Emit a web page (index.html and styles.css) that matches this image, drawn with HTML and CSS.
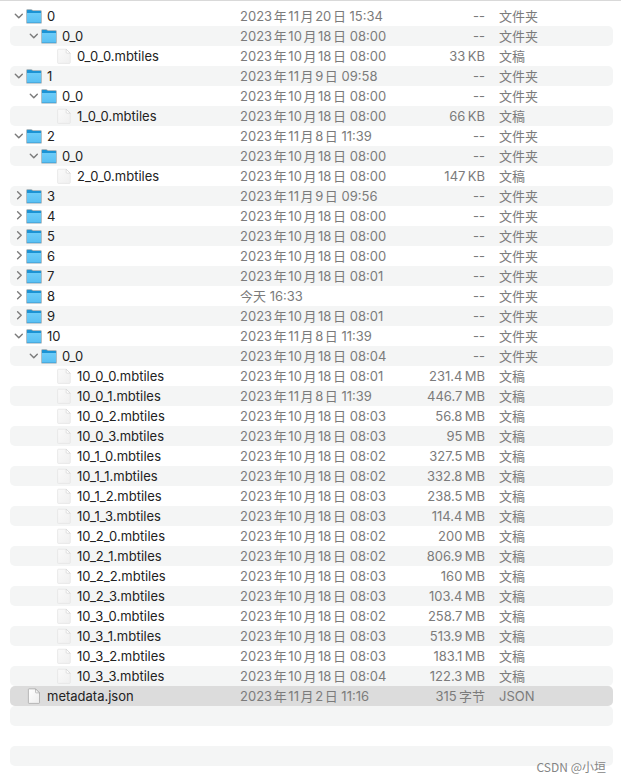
FILE: index.html
```
<!DOCTYPE html>
<html lang="zh-CN">
<head>
<meta charset="utf-8">
<meta name="viewport" content="width=device-width, initial-scale=1">
<title>文件列表</title>
<link rel="stylesheet" href="styles.css">
</head>
<body>
<svg class="defs" width="0" height="0" aria-hidden="true">
  <defs>
    <linearGradient id="folder-front" x1="0" y1="0" x2="0" y2="1">
      <stop offset="0" stop-color="#6dccf8"/>
      <stop offset="1" stop-color="#58c0f3"/>
    </linearGradient>
    <linearGradient id="paper" x1="0" y1="0" x2="1" y2="1">
      <stop offset="0" stop-color="#ffffff"/>
      <stop offset="1" stop-color="#ededed"/>
    </linearGradient>
    <linearGradient id="paper-dim" x1="0" y1="0" x2="1" y2="1">
      <stop offset="0" stop-color="#fafafa"/>
      <stop offset="1" stop-color="#f0f0f0"/>
    </linearGradient>
    <symbol id="open" viewBox="0 0 12 16"><path d="M1.3 6.2 4.8 9.8 8.3 6.2" fill="none" stroke="#7b7b7b" stroke-width="1.4" stroke-linecap="round" stroke-linejoin="round"/></symbol>
    <symbol id="closed" viewBox="0 0 12 16"><path d="M3.6 3.8 7.2 7.3 3.6 10.8" fill="none" stroke="#7b7b7b" stroke-width="1.4" stroke-linecap="round" stroke-linejoin="round"/></symbol>
    <symbol id="folder" viewBox="0 0 16 16">
      <path d="M.3 14.7V2.2Q.3 1.2 1.3 1.2H5.2Q5.8 1.2 6.3 1.7T7.4 2.2H14.7Q15.7 2.2 15.7 3.2V14.7Q15.7 15.6 14.9 15.6H1.1Q.3 15.6.3 14.7Z" fill="#8fa5b0"/>
      <path d="M1 5V2.6Q1 2 1.6 2H5.2L6.8 3H14.4Q15 3 15 3.6V5Z" fill="#1b93d4"/>
      <path d="M1 5H15V14.8H1Z" fill="url(#folder-front)"/>
      <path d="M1 14.3H15V15H1Z" fill="#3fa5dc"/>
    </symbol>
    <symbol id="file" viewBox="0 0 16 16">
      <path d="M2.4 1.2H10.2L14.2 5.2V14.6Q14.2 15.4 13.4 15.4H2.4Q1.6 15.4 1.6 14.6V2Q1.6 1.2 2.4 1.2Z" fill="url(#paper-dim)" stroke="#e2e2e2" stroke-width=".7"/>
      <path d="M10.2 1.2V4.5Q10.2 5.2 10.9 5.2H14.2Z" fill="#fff" stroke="#cfcfcf" stroke-width=".6"/>
    </symbol>
    <symbol id="json" viewBox="0 0 16 16">
      <path d="M3 .9H9.5L13.5 4.9V14.7Q13.5 15.4 12.8 15.4H3Q2.4 15.4 2.4 14.7V1.6Q2.4.9 3 .9Z" fill="url(#paper)" stroke="#a0a0a0" stroke-width=".7"/>
      <path d="M9.5.9V4.2Q9.5 4.9 10.2 4.9H13.5Z" fill="#f2f2f2" stroke="#a0a0a0" stroke-width=".6"/>
    </symbol>
  </defs>
</svg>
<main class="browser">
<table class="files" aria-label="文件">
<colgroup><col><col class="col-date"><col class="col-size"><col class="col-kind"></colgroup>
<tbody>
<tr><td><div class="name"><button class="toggle" aria-label="折叠"><svg><use href="#open"/></svg></button><svg class="icon"><use href="#folder"/></svg>0</div></td><td>2023年11月20日 15:34</td><td>--</td><td>文件夹</td></tr>
<tr><td><div class="name l1"><button class="toggle" aria-label="折叠"><svg><use href="#open"/></svg></button><svg class="icon"><use href="#folder"/></svg>0_0</div></td><td>2023年10月18日 08:00</td><td>--</td><td>文件夹</td></tr>
<tr><td><div class="name l2"><svg class="icon"><use href="#file"/></svg>0_0_0.mbtiles</div></td><td>2023年10月18日 08:00</td><td>33&thinsp;KB</td><td>文稿</td></tr>
<tr><td><div class="name"><button class="toggle" aria-label="折叠"><svg><use href="#open"/></svg></button><svg class="icon"><use href="#folder"/></svg>1</div></td><td>2023年11月9日 09:58</td><td>--</td><td>文件夹</td></tr>
<tr><td><div class="name l1"><button class="toggle" aria-label="折叠"><svg><use href="#open"/></svg></button><svg class="icon"><use href="#folder"/></svg>0_0</div></td><td>2023年10月18日 08:00</td><td>--</td><td>文件夹</td></tr>
<tr><td><div class="name l2"><svg class="icon"><use href="#file"/></svg>1_0_0.mbtiles</div></td><td>2023年10月18日 08:00</td><td>66&thinsp;KB</td><td>文稿</td></tr>
<tr><td><div class="name"><button class="toggle" aria-label="折叠"><svg><use href="#open"/></svg></button><svg class="icon"><use href="#folder"/></svg>2</div></td><td>2023年11月8日 11:39</td><td>--</td><td>文件夹</td></tr>
<tr><td><div class="name l1"><button class="toggle" aria-label="折叠"><svg><use href="#open"/></svg></button><svg class="icon"><use href="#folder"/></svg>0_0</div></td><td>2023年10月18日 08:00</td><td>--</td><td>文件夹</td></tr>
<tr><td><div class="name l2"><svg class="icon"><use href="#file"/></svg>2_0_0.mbtiles</div></td><td>2023年10月18日 08:00</td><td>147&thinsp;KB</td><td>文稿</td></tr>
<tr><td><div class="name"><button class="toggle" aria-label="展开"><svg><use href="#closed"/></svg></button><svg class="icon"><use href="#folder"/></svg>3</div></td><td>2023年11月9日 09:56</td><td>--</td><td>文件夹</td></tr>
<tr><td><div class="name"><button class="toggle" aria-label="展开"><svg><use href="#closed"/></svg></button><svg class="icon"><use href="#folder"/></svg>4</div></td><td>2023年10月18日 08:00</td><td>--</td><td>文件夹</td></tr>
<tr><td><div class="name"><button class="toggle" aria-label="展开"><svg><use href="#closed"/></svg></button><svg class="icon"><use href="#folder"/></svg>5</div></td><td>2023年10月18日 08:00</td><td>--</td><td>文件夹</td></tr>
<tr><td><div class="name"><button class="toggle" aria-label="展开"><svg><use href="#closed"/></svg></button><svg class="icon"><use href="#folder"/></svg>6</div></td><td>2023年10月18日 08:00</td><td>--</td><td>文件夹</td></tr>
<tr><td><div class="name"><button class="toggle" aria-label="展开"><svg><use href="#closed"/></svg></button><svg class="icon"><use href="#folder"/></svg>7</div></td><td>2023年10月18日 08:01</td><td>--</td><td>文件夹</td></tr>
<tr><td><div class="name"><button class="toggle" aria-label="展开"><svg><use href="#closed"/></svg></button><svg class="icon"><use href="#folder"/></svg>8</div></td><td>今天 16:33</td><td>--</td><td>文件夹</td></tr>
<tr><td><div class="name"><button class="toggle" aria-label="展开"><svg><use href="#closed"/></svg></button><svg class="icon"><use href="#folder"/></svg>9</div></td><td>2023年10月18日 08:01</td><td>--</td><td>文件夹</td></tr>
<tr><td><div class="name"><button class="toggle" aria-label="折叠"><svg><use href="#open"/></svg></button><svg class="icon"><use href="#folder"/></svg>10</div></td><td>2023年11月8日 11:39</td><td>--</td><td>文件夹</td></tr>
<tr><td><div class="name l1"><button class="toggle" aria-label="折叠"><svg><use href="#open"/></svg></button><svg class="icon"><use href="#folder"/></svg>0_0</div></td><td>2023年10月18日 08:04</td><td>--</td><td>文件夹</td></tr>
<tr><td><div class="name l2"><svg class="icon"><use href="#file"/></svg>10_0_0.mbtiles</div></td><td>2023年10月18日 08:01</td><td>231.4&thinsp;MB</td><td>文稿</td></tr>
<tr><td><div class="name l2"><svg class="icon"><use href="#file"/></svg>10_0_1.mbtiles</div></td><td>2023年11月8日 11:39</td><td>446.7&thinsp;MB</td><td>文稿</td></tr>
<tr><td><div class="name l2"><svg class="icon"><use href="#file"/></svg>10_0_2.mbtiles</div></td><td>2023年10月18日 08:03</td><td>56.8&thinsp;MB</td><td>文稿</td></tr>
<tr><td><div class="name l2"><svg class="icon"><use href="#file"/></svg>10_0_3.mbtiles</div></td><td>2023年10月18日 08:03</td><td>95&thinsp;MB</td><td>文稿</td></tr>
<tr><td><div class="name l2"><svg class="icon"><use href="#file"/></svg>10_1_0.mbtiles</div></td><td>2023年10月18日 08:02</td><td>327.5&thinsp;MB</td><td>文稿</td></tr>
<tr><td><div class="name l2"><svg class="icon"><use href="#file"/></svg>10_1_1.mbtiles</div></td><td>2023年10月18日 08:02</td><td>332.8&thinsp;MB</td><td>文稿</td></tr>
<tr><td><div class="name l2"><svg class="icon"><use href="#file"/></svg>10_1_2.mbtiles</div></td><td>2023年10月18日 08:03</td><td>238.5&thinsp;MB</td><td>文稿</td></tr>
<tr><td><div class="name l2"><svg class="icon"><use href="#file"/></svg>10_1_3.mbtiles</div></td><td>2023年10月18日 08:03</td><td>114.4&thinsp;MB</td><td>文稿</td></tr>
<tr><td><div class="name l2"><svg class="icon"><use href="#file"/></svg>10_2_0.mbtiles</div></td><td>2023年10月18日 08:02</td><td>200&thinsp;MB</td><td>文稿</td></tr>
<tr><td><div class="name l2"><svg class="icon"><use href="#file"/></svg>10_2_1.mbtiles</div></td><td>2023年10月18日 08:02</td><td>806.9&thinsp;MB</td><td>文稿</td></tr>
<tr><td><div class="name l2"><svg class="icon"><use href="#file"/></svg>10_2_2.mbtiles</div></td><td>2023年10月18日 08:03</td><td>160&thinsp;MB</td><td>文稿</td></tr>
<tr><td><div class="name l2"><svg class="icon"><use href="#file"/></svg>10_2_3.mbtiles</div></td><td>2023年10月18日 08:03</td><td>103.4&thinsp;MB</td><td>文稿</td></tr>
<tr><td><div class="name l2"><svg class="icon"><use href="#file"/></svg>10_3_0.mbtiles</div></td><td>2023年10月18日 08:02</td><td>258.7&thinsp;MB</td><td>文稿</td></tr>
<tr><td><div class="name l2"><svg class="icon"><use href="#file"/></svg>10_3_1.mbtiles</div></td><td>2023年10月18日 08:03</td><td>513.9&thinsp;MB</td><td>文稿</td></tr>
<tr><td><div class="name l2"><svg class="icon"><use href="#file"/></svg>10_3_2.mbtiles</div></td><td>2023年10月18日 08:03</td><td>183.1&thinsp;MB</td><td>文稿</td></tr>
<tr><td><div class="name l2"><svg class="icon"><use href="#file"/></svg>10_3_3.mbtiles</div></td><td>2023年10月18日 08:04</td><td>122.3&thinsp;MB</td><td>文稿</td></tr>
<tr class="selected"><td><div class="name l0"><svg class="icon"><use href="#json"/></svg>metadata.json</div></td><td>2023年11月2日 11:16</td><td>315&thinsp;字节</td><td>JSON</td></tr>
<tr><td></td><td></td><td></td><td></td></tr>
<tr><td></td><td></td><td></td><td></td></tr>
<tr><td></td><td></td><td></td><td></td></tr>
</tbody>
</table>
<div class="watermark">CSDN @小垣</div>
</main>
</body>
</html>
```
FILE: styles.css
```
* {
  box-sizing: border-box;
}

body {
  margin: 0;
  background: #fff;
  font: 13px/20px Inter, "Noto Sans CJK SC", sans-serif;
  color: #222;
}

.defs {
  position: absolute;
}

.browser {
  position: relative;
  border-top: 1px solid #d9d9d9;
  padding: 5px 8px 16px 10px;
}

.files {
  width: 100%;
  table-layout: fixed;
  border-collapse: separate;
  border-spacing: 0;
}

.col-date {
  width: 170px;
}

.col-size {
  width: 75px;
}

.col-kind {
  width: 128px;
}

td {
  height: 20px;
  padding: 0;
  line-height: 20px;
  white-space: nowrap;
  color: #7b7b7b;
  text-autospace: normal;
}

td:first-child {
  color: #222;
  border-radius: 5px 0 0 5px;
}

td:nth-child(3) {
  text-align: right;
}

td:last-child {
  padding-left: 14px;
  border-radius: 0 5px 5px 0;
}

tr:nth-child(even) td {
  background: #f4f5f5;
}

tr.selected td {
  background: #dcdcdc;
}

.name {
  display: flex;
  align-items: center;
  height: 20px;
  padding-left: 4px;
}

.name.l0 {
  padding-left: 16px;
}

.name.l1 {
  padding-left: 19px;
}

.name.l2 {
  padding-left: 46px;
}

.toggle {
  width: 12px;
  height: 16px;
  padding: 0;
  border: 0;
  background: none;
}

.toggle svg {
  display: block;
  width: 12px;
  height: 16px;
}

.icon {
  flex: none;
  width: 16px;
  height: 16px;
  margin-right: 5px;
}

.watermark {
  position: absolute;
  right: 15px;
  bottom: 5px;
  font: 12px/20px "Noto Sans CJK SC", sans-serif;
  color: #858585;
}
```
